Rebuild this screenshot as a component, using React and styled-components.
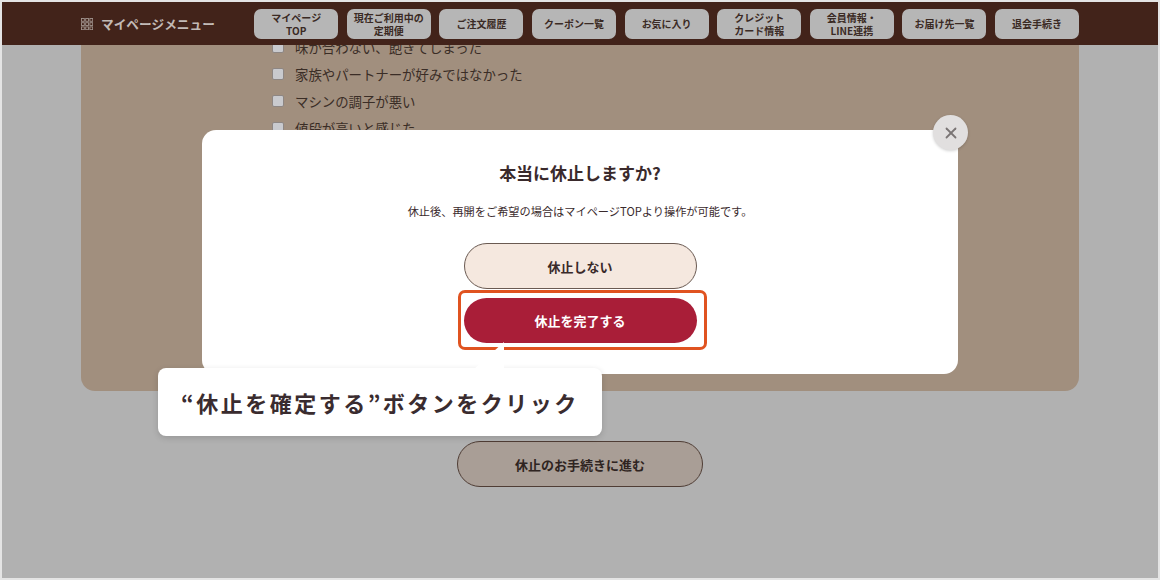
import React from "react";
import styled, { createGlobalStyle } from "styled-components";

const Global = createGlobalStyle`
  html, body { margin: 0; padding: 0; background: #e6e6e6; }
  body { font-family: "Noto Sans CJK JP", "Noto Sans", sans-serif; }
  * { box-sizing: border-box; }
`;

const Frame = styled.div`
  position: relative;
  width: 1160px;
  height: 580px;
  border: 2px solid #e4e4e4;
  background: #b1b1b1;
  overflow: hidden;
`;

const Header = styled.header`
  position: absolute;
  top: 0;
  left: 0;
  right: 0;
  height: 43px;
  background: #42231a;
  z-index: 2;
`;

const HeaderInner = styled.div`
  width: 998px;
  height: 100%;
  margin: 0 auto;
  display: flex;
  align-items: center;
`;

const Logo = styled.div`
  display: flex;
  align-items: center;
  gap: 8px;
  color: #c2bab6;
  font-size: 12.7px;
  font-weight: 700;
`;

const Nav = styled.nav`
  margin-left: auto;
  display: flex;
  gap: 8.6px;
`;

const NavButton = styled.div`
  width: 84px;
  height: 30px;
  border-radius: 7px;
  background: #b6b6b6;
  color: #3a2a24;
  font-size: 10px;
  font-weight: 700;
  line-height: 13px;
  display: flex;
  align-items: center;
  justify-content: center;
  text-align: center;
  white-space: pre-line;
`;

const Main = styled.main`
  display: flex;
  flex-direction: column;
  align-items: center;
`;

const Card = styled.section`
  width: 998px;
  height: 389px;
  background: #a18f7e;
  border-radius: 0 0 14px 14px;
  padding: 31px 0 0 191px;
`;

const List = styled.ul`
  list-style: none;
  margin: 0;
  padding: 0;
`;

const Item = styled.li`
  display: flex;
  align-items: center;
  height: 27px;
  color: #3a2d26;
  font-size: 13.4px;
`;

const Check = styled.span`
  width: 12px;
  height: 12px;
  margin-right: 11px;
  background: #c9cace;
  border: 1px solid #8d8683;
  border-radius: 2px;
`;

const NextButton = styled.div`
  margin-top: 50px;
  width: 246px;
  height: 46px;
  border-radius: 23px;
  border: 1px solid #4f3d35;
  background: #a99e96;
  color: #2f2421;
  font-size: 13px;
  font-weight: 700;
  display: flex;
  align-items: center;
  justify-content: center;
`;

const Backdrop = styled.div`
  position: absolute;
  inset: 0;
  z-index: 3;
  display: flex;
  flex-direction: column;
  align-items: center;
  padding-top: 128px;
`;

const Modal = styled.div`
  position: relative;
  width: 756px;
  height: 244px;
  background: #ffffff;
  border-radius: 14px;
  display: flex;
  flex-direction: column;
  align-items: center;
  padding-top: 31px;
  color: #3a2a2c;
`;

const Close = styled.div`
  position: absolute;
  top: -15px;
  right: -10px;
  width: 35px;
  height: 35px;
  border-radius: 50%;
  background: #e1dfdf;
  box-shadow: 0 1px 3px rgba(0, 0, 0, 0.18);
  display: flex;
  align-items: center;
  justify-content: center;
`;

const Title = styled.h2`
  margin: 0;
  font-size: 17px;
  line-height: 24px;
  font-weight: 700;
`;

const Lead = styled.p`
  margin: 17px 0 0;
  font-size: 11.2px;
  line-height: 18px;
`;

const Buttons = styled.div`
  margin-top: 23px;
  display: flex;
  flex-direction: column;
  gap: 9px;
`;

const PillButton = styled.div`
  position: relative;
  width: 233px;
  height: ${(p) => (p.$primary ? "45px" : "46px")};
  border-radius: 23px;
  border: ${(p) => (p.$primary ? "none" : "1px solid #6a5a52")};
  background: ${(p) => (p.$primary ? "#a91e38" : "#f5e8df")};
  color: ${(p) => (p.$primary ? "#ffffff" : "#3a2a2a")};
  font-size: 13px;
  font-weight: 700;
  display: flex;
  align-items: center;
  justify-content: center;
`;

const Highlight = styled.span`
  position: absolute;
  top: -8px;
  left: -6px;
  right: -10px;
  bottom: -7px;
  border: 3px solid #e05320;
  border-radius: 7px;
`;

const Callout = styled.div`
  position: absolute;
  left: 156px;
  top: 366px;
  width: 444px;
  height: 68px;
  background: #ffffff;
  border-radius: 8px;
  box-shadow: 0 2px 6px rgba(0, 0, 0, 0.15);
  display: flex;
  align-items: center;
  justify-content: center;
  color: #3a2c2f;
  font-size: 22px;
  font-weight: 700;
  letter-spacing: 2.5px;

  &::before {
    content: "";
    position: absolute;
    left: 316px;
    top: -26px;
    width: 30px;
    height: 27px;
    background: #ffffff;
    clip-path: polygon(100% 0, 100% 100%, 0 100%);
  }
`;

const GridIcon = () => (
  <svg width="12" height="12" viewBox="0 0 12 12" fill="none" stroke="#a1948e" strokeWidth="0.9">
    {[0, 4.2, 8.4].map((y) =>
      [0, 4.2, 8.4].map((x) => (
        <rect key={`${x}-${y}`} x={x + 0.5} y={y + 0.5} width="2.8" height="2.8" />
      ))
    )}
  </svg>
);

const navItems = [
  "マイページ\nTOP",
  "現在ご利用中の\n定期便",
  "ご注文履歴",
  "クーポン一覧",
  "お気に入り",
  "クレジット\nカード情報",
  "会員情報・\nLINE連携",
  "お届け先一覧",
  "退会手続き",
];

const reasons = [
  "味が合わない、飽きてしまった",
  "家族やパートナーが好みではなかった",
  "マシンの調子が悪い",
  "値段が高いと感じた",
  "飲む量が少なく、余ってしまう",
  "一時的に不在にする",
  "その他",
];

export default function App() {
  return (
    <>
      <Global />
      <Frame>
        <Header>
          <HeaderInner>
            <Logo>
              <GridIcon />
              マイページメニュー
            </Logo>
            <Nav>
              {navItems.map((t) => (
                <NavButton key={t}>{t}</NavButton>
              ))}
            </Nav>
          </HeaderInner>
        </Header>
        <Main>
          <Card>
            <List>
              {reasons.map((r) => (
                <Item key={r}>
                  <Check />
                  {r}
                </Item>
              ))}
            </List>
          </Card>
          <NextButton>休止のお手続きに進む</NextButton>
        </Main>
        <Backdrop>
          <Modal>
            <Close>
              <svg width="12" height="12" viewBox="0 0 12 12" stroke="#7a7575" strokeWidth="1.8" strokeLinecap="round">
                <line x1="1.5" y1="1.5" x2="10.5" y2="10.5" />
                <line x1="10.5" y1="1.5" x2="1.5" y2="10.5" />
              </svg>
            </Close>
            <Title>本当に休止しますか?</Title>
            <Lead>休止後、再開をご希望の場合はマイページTOPより操作が可能です。</Lead>
            <Buttons>
              <PillButton>休止しない</PillButton>
              <PillButton $primary>
                休止を完了する
                <Highlight />
              </PillButton>
            </Buttons>
          </Modal>
          <Callout>“休止を確定する”ボタンをクリック</Callout>
        </Backdrop>
      </Frame>
    </>
  );
}
